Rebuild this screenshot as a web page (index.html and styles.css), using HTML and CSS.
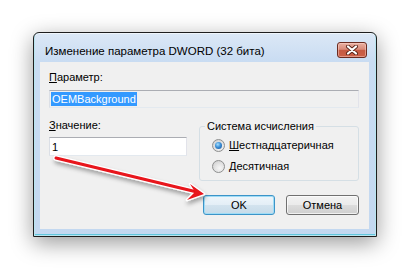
FILE: index.html
```html
<!DOCTYPE html>
<html lang="ru">
<head>
    <meta charset="UTF-8">
    <meta name="viewport" content="width=device-width, initial-scale=1.0">
    <title>Изменение параметра DWORD (32 бита)</title>
    <link rel="stylesheet" href="styles.css">
</head>
<body>

    <div class="window">
        <div class="titlebar">
            <span class="title">Изменение параметра DWORD (32 бита)</span>
            <span class="close">
                <svg width="14" height="10" viewBox="0 0 14 10">
                    <path d="M3 1.5 L11 8.5 M11 1.5 L3 8.5" stroke="#5a2418" stroke-width="4" stroke-linecap="round"/>
                    <path d="M3 1.5 L11 8.5 M11 1.5 L3 8.5" stroke="#fff" stroke-width="2.2" stroke-linecap="round"/>
                </svg>
            </span>
        </div>
        <div class="client">
            <div class="label"><u>П</u>араметр:</div>
            <div class="field readonly"><span class="sel">OEMBackground</span></div>
            <div class="row">
                <div class="col-value">
                    <div class="label"><u>З</u>начение:</div>
                    <div class="field">1</div>
                </div>
                <fieldset class="group">
                    <legend>Система исчисления</legend>
                    <div class="option"><span class="radio checked"></span><span><u>Ш</u>естнадцатеричная</span></div>
                    <div class="option"><span class="radio"></span><span><u>Д</u>есятичная</span></div>
                </fieldset>
            </div>
            <div class="buttons">
                <button class="btn default">OK</button>
                <button class="btn cancel">Отмена</button>
            </div>
        </div>
    </div>

    <!-- red pointer drawn over the dialog -->
    <svg class="arrow" width="409" height="269" viewBox="0 0 409 269">
        <defs>
            <filter id="shade" x="-20%" y="-20%" width="140%" height="160%">
                <feDropShadow dx="1" dy="3" stdDeviation="2" flood-color="#000" flood-opacity="0.35"/>
            </filter>
        </defs>
        <g filter="url(#shade)">
            <path d="M56 158 L197 192" stroke="#fff" stroke-width="5.5" stroke-linecap="round"/>
            <polygon points="204,194 190,184 195,192 187,200" fill="#fff" stroke="#fff" stroke-width="2.5" stroke-linejoin="round"/>
            <path d="M56 158 L197 192" stroke="#e8121a" stroke-width="3" stroke-linecap="round"/>
            <polygon points="204,194 190,184 195,192 187,200" fill="#e8121a"/>
        </g>
    </svg>

</body>
</html>
```

FILE: styles.css
```css
body {
    margin: 0;
    padding: 32px 0 0 33px;
    width: 409px;
    height: 269px;
    box-sizing: border-box;
    background: #fff;
    position: relative;
    overflow: hidden;
    font-family: "Liberation Sans", Arial, sans-serif;
    font-size: 11px;
    line-height: 14px;
    color: #000;
}
.window {
    width: 344px;
    height: 205px;
    box-sizing: border-box;
    padding: 0 7px 7px 6px;
    border: 1px solid #1e1e1e;
    border-radius: 6px 6px 0 0;
    background: linear-gradient(#dce8f6 0, #c9dcf2 28px, #c3d8f0 100%);
    box-shadow: inset 0 0 0 1px rgba(255, 255, 255, 0.55), inset 0 -1px 0 1px #62c6dc, 0 6px 22px rgba(0, 0, 0, 0.4);
}
.titlebar {
    height: 29px;
    display: flex;
    align-items: flex-start;
    justify-content: space-between;
    padding: 0 2px 0 5px;
}
.title {
    margin-top: 11px;
    font-size: 11.5px;
    color: #000;
}
.close {
    margin-top: 9px;
    width: 30px;
    height: 16px;
    box-sizing: border-box;
    border: 1px solid #6b2b20;
    border-radius: 3px;
    background: linear-gradient(#eab0a2 0%, #d98b7a 45%, #c65a42 52%, #cd6148 100%);
    box-shadow: inset 0 0 0 1px rgba(255, 220, 210, 0.45);
    display: flex;
    align-items: center;
    justify-content: center;
}
.client {
    height: 167px;
    box-sizing: border-box;
    padding: 8px 10px 0 9px;
    background: #f0f0f0;
}
.label {
    height: 14px;
}
.field {
    margin-top: 6px;
    height: 18px;
    box-sizing: border-box;
    border: 1px solid #abadb3;
    border-color: #abadb3 #e2e3ea #e3e9ef #dbdfe6;
    background: #fff;
    padding: 1px 2px;
    line-height: 14px;
}
.field.readonly {
    background: #f0f0f0;
    padding: 1px 1px;
}
.sel {
    display: inline-block;
    background: #3399ff;
    color: #fff;
    padding: 0 1px;
    line-height: 14px;
}
.row {
    display: flex;
    align-items: flex-start;
    gap: 12px;
    margin-top: 10px;
}
.col-value {
    width: 138px;
}
.col-value .field {
    margin-top: 5px;
    height: 19px;
    padding-top: 2px;
}
.group {
    width: 160px;
    box-sizing: border-box;
    margin: 1px 0 0 0;
    padding: 0 0 6px 12px;
    border: 1px solid #d5dfe5;
    border-radius: 3px;
    min-width: 0;
}
.group legend {
    margin-left: -7px;
    padding: 0 2px;
    line-height: 14px;
}
.option {
    display: flex;
    align-items: center;
    height: 16px;
    margin-top: 5px;
}
.option:first-of-type {
    margin-top: 4px;
}
.radio {
    width: 13px;
    height: 13px;
    box-sizing: border-box;
    margin-right: 4px;
    border: 1px solid #8e8f8f;
    border-radius: 50%;
    background: radial-gradient(circle at 60% 65%, #f6f6f6 0, #e4e4e4 45%, #c8c8c8 100%);
    display: flex;
    align-items: center;
    justify-content: center;
}
.radio.checked::after {
    content: "";
    width: 7px;
    height: 7px;
    border-radius: 50%;
    background: radial-gradient(circle at 40% 35%, #a6e0ff 0, #3c8fd6 45%, #174f92 100%);
}
.buttons {
    display: flex;
    justify-content: flex-end;
    gap: 11px;
    margin-top: 14px;
}
.btn {
    width: 73px;
    height: 20px;
    padding: 0;
    font-family: inherit;
    font-size: 11px;
    color: #000;
    border: 1px solid #707070;
    border-radius: 3px;
    background: linear-gradient(#f2f2f2 0%, #ebebeb 50%, #dddddd 50%, #cfcfcf 100%);
    box-shadow: inset 0 0 0 1px rgba(255, 255, 255, 0.7);
}
.btn.default {
    width: 72px;
    border-color: #3c94c8;
    background: linear-gradient(#eef6fb 0%, #e3eef6 50%, #d3e3ee 50%, #c6dbe9 100%);
    box-shadow: inset 0 0 0 1px #9fdcf6;
}
.arrow {
    position: absolute;
    left: 0;
    top: 0;
    pointer-events: none;
}
```
